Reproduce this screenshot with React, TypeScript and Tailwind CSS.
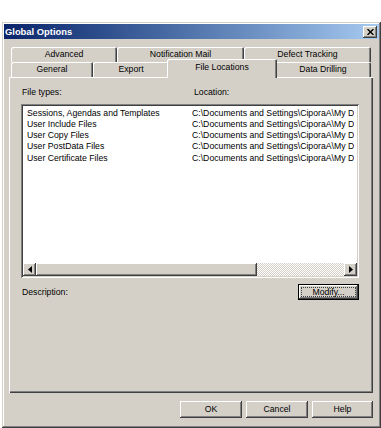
import React from 'react';

// ── Win classic bevels ────────────────────────────────────────────────────────
const raised =
  'shadow-[inset_-1px_-1px_#404040,inset_1px_1px_#ffffff,inset_-2px_-2px_#808080,inset_2px_2px_#d4d0c8]';
const sunken =
  'shadow-[inset_1px_1px_#808080,inset_-1px_-1px_#ffffff,inset_2px_2px_#404040,inset_-2px_-2px_#d4d0c8]';
const tabEdge = 'shadow-[inset_1px_1px_#ffffff,inset_-1px_0_#404040,inset_-2px_0_#808080]';

const rows = [
  'Sessions, Agendas and Templates',
  'User Include Files',
  'User Copy Files',
  'User PostData Files',
  'User Certificate Files',
];

function Tab({ label, w, selected }: { label: string; w: string; selected?: boolean }) {
  return (
    <div
      className={`${w} ${tabEdge} flex items-center justify-center rounded-t-[2px] bg-[#d4d0c8] ${
        selected ? 'relative z-10 -mx-[2px] -mb-px h-[19px] pb-[3px]' : 'h-[15px]'
      }`}
    >
      {label}
    </div>
  );
}

function Arrow({ dir }: { dir: 'left' | 'right' }) {
  return (
    <div className={`${raised} flex h-full w-[13px] shrink-0 items-center justify-center bg-[#d4d0c8]`}>
      <svg width="4" height="7" viewBox="0 0 4 7">
        {dir === 'left' ? <path d="M4 0 L0 3.5 L4 7 Z" fill="#000" /> : <path d="M0 0 L4 3.5 L0 7 Z" fill="#000" />}
      </svg>
    </div>
  );
}

function Button({ label, w, isDefault }: { label: string; w: string; isDefault?: boolean }) {
  if (isDefault) {
    return (
      <div className={`${w} h-[16px] border border-black bg-[#d4d0c8]`}>
        <div className={`${raised} h-full w-full p-[2px]`}>
          <div className="flex h-full w-full items-center justify-center border border-dotted border-[#404040] leading-none">
            {label}
          </div>
        </div>
      </div>
    );
  }
  return (
    <div className={`${w} ${raised} flex h-[17px] items-center justify-center bg-[#d4d0c8]`}>{label}</div>
  );
}

export default function App() {
  return (
    <div
      className="h-[428px] w-[381px] overflow-hidden bg-white pl-[2px] pt-[22px] text-[8.7px] leading-[11px] text-black"
      style={{ fontFamily: '"Liberation Sans", Arial, sans-serif' }}
    >
      <div className="flex h-[406px] w-[379px] flex-col bg-[#d4d0c8] p-[2px] shadow-[inset_-1px_-1px_#404040,inset_1px_1px_#d4d0c8,inset_-2px_-2px_#808080,inset_2px_2px_#ffffff]">
        {/* Title bar */}
        <div className="flex h-[15px] shrink-0 items-center justify-between bg-gradient-to-r from-[#0a246a] to-[#a6caf0] pl-[1px] pr-[2px]">
          <span className="text-[9.4px] font-bold text-white">Global Options</span>
          <div className={`${raised} flex h-[12px] w-[14px] items-center justify-center bg-[#d4d0c8]`}>
            <svg width="7" height="6" viewBox="0 0 7 6">
              <path d="M0.5 0 L6.5 6 M6.5 0 L0.5 6" stroke="#000" strokeWidth="1.4" />
            </svg>
          </div>
        </div>

        {/* Tabs */}
        <div className="ml-[5px] mt-[9px] w-[364px]">
          <div className="flex h-[14px] items-end px-[2px]">
            <Tab label="Advanced" w="w-[106px]" />
            <Tab label="Notification Mail" w="w-[127px]" />
            <Tab label="Defect Tracking" w="w-[127px]" />
          </div>
          <div className="flex h-[15px] items-end px-[2px]">
            <Tab label="General" w="w-[82px]" />
            <Tab label="Export" w="w-[76px]" />
            <Tab label="File Locations" w="w-[110px]" selected />
            <Tab label="Data Drilling" w="w-[96px]" />
          </div>

          {/* Panel */}
          <div className="flex h-[316px] flex-col bg-[#d4d0c8] pl-[12px] pr-[14px] pt-[10px] shadow-[inset_1px_1px_#ffffff,inset_-1px_-1px_#404040,inset_-2px_-2px_#808080]">
            <div className="flex h-[11px] pl-[1px]">
              <span className="w-[172px]">File types:</span>
              <span>Location:</span>
            </div>

            <div className={`${sunken} mt-[6px] flex h-[174px] flex-col bg-white p-[2px]`}>
              <div className="flex-1 pt-[1.5px]">
                {rows.map((r) => (
                  <div key={r} className="flex h-[11.25px] items-center whitespace-nowrap pl-[4px]">
                    <span className="w-[165px] shrink-0">{r}</span>
                    <span className="overflow-hidden">C:\Documents and Settings\CiporaA\My D</span>
                  </div>
                ))}
              </div>
              <div className="flex h-[13px] shrink-0">
                <Arrow dir="left" />
                <div className={`${raised} h-full w-[221px] shrink-0 bg-[#d4d0c8]`} />
                <div className="h-full flex-1 bg-[repeating-conic-gradient(#d4d0c8_0_25%,#ffffff_0_50%)] bg-[length:2px_2px]" />
                <Arrow dir="right" />
              </div>
            </div>

            <div className="mt-[6px] flex items-center justify-between">
              <span className="pl-[1px]">Description:</span>
              <Button label="Modify..." w="w-[61px]" isDefault />
            </div>
          </div>
        </div>

        {/* Bottom buttons */}
        <div className="mr-[6px] mt-[8px] flex justify-end gap-[4px]">
          <Button label="OK" w="w-[62px]" />
          <Button label="Cancel" w="w-[62px]" />
          <Button label="Help" w="w-[61px]" />
        </div>
      </div>
    </div>
  );
}
